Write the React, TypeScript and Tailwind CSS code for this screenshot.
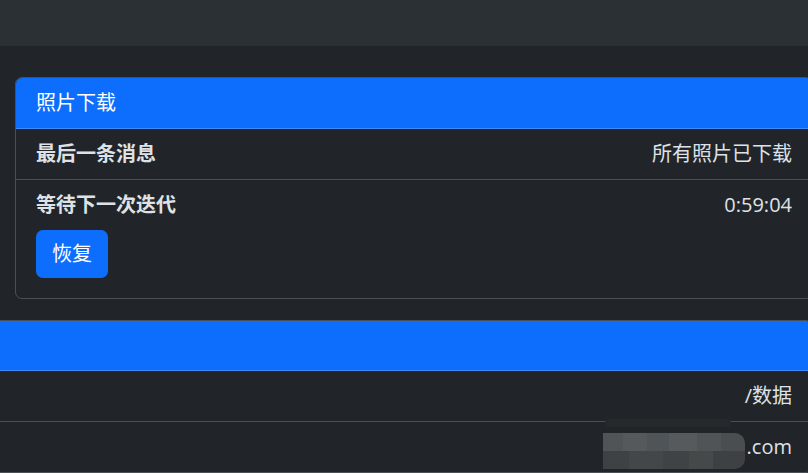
const font = "font-['Open_Sans','Noto_Sans_CJK_SC',sans-serif]";

function Redacted() {
  return (
    <div className="absolute -top-[13px] -left-[144px] w-[142px] h-[50px]">
      <div className="ml-[2px] h-[8px] w-[126px] bg-[#25292c]" />
      <div className="mt-[6px] flex h-[18px] overflow-hidden rounded-tr-[10px]">
        <div className="w-[20px] bg-[#505456]" />
        <div className="w-[24px] bg-[#55595b]" />
        <div className="w-[22px] bg-[#4f5458]" />
        <div className="w-[28px] bg-[#565a5b]" />
        <div className="w-[24px] bg-[#505455]" />
        <div className="flex-1 bg-[#4a4e50]" />
      </div>
      <div className="flex h-[18px] overflow-hidden rounded-br-[10px]">
        <div className="w-[26px] bg-[#3e4244]" />
        <div className="w-[34px] bg-[#434749]" />
        <div className="w-[26px] bg-[#3f4345]" />
        <div className="w-[24px] bg-[#45494a]" />
        <div className="flex-1 bg-[#3d4143]" />
      </div>
    </div>
  );
}

export default function App() {
  return (
    <div className={`w-[808px] h-[473px] overflow-hidden bg-[#212529] text-[20px] leading-[30px] text-[#dee2e6] ${font}`}>
      <div className="h-[46px] bg-[#2b3035]" />

      <div className="mt-[31px] ml-[15px] w-[798px] rounded-[7px] border border-[#495057] overflow-hidden">
        <div className="bg-[#0d6efd] px-[20px] py-[10px] text-white border-b border-[#3d8bfd]">照片下载</div>
        <div className="flex justify-between px-[20px] py-[10px] border-b border-[#495057] h-[51px]">
          <span className="font-bold">最后一条消息</span>
          <span>所有照片已下载</span>
        </div>
        <div className="px-[20px] pt-[10px] pb-[20px]">
          <div className="flex justify-between">
            <span className="font-bold">等待下一次迭代</span>
            <span>0:59:04</span>
          </div>
          <button className="mt-[10px] h-[48px] w-[72px] rounded-[7px] bg-[#0d6efd] text-white">恢复</button>
        </div>
      </div>

      <div className="mt-[21px] -ml-[10px] w-[823px] rounded-[7px] border border-[#495057] overflow-hidden">
        <div className="bg-[#0d6efd] h-[50px] border-b border-[#3d8bfd]" />
        <div className="flex justify-end px-[20px] py-[10px] border-b border-[#495057] h-[51px]">
          <span>/数据</span>
        </div>
        <div className="flex justify-end px-[20px] py-[10px]">
          <span className="relative">
            <Redacted />
            .com
          </span>
        </div>
      </div>
    </div>
  );
}
